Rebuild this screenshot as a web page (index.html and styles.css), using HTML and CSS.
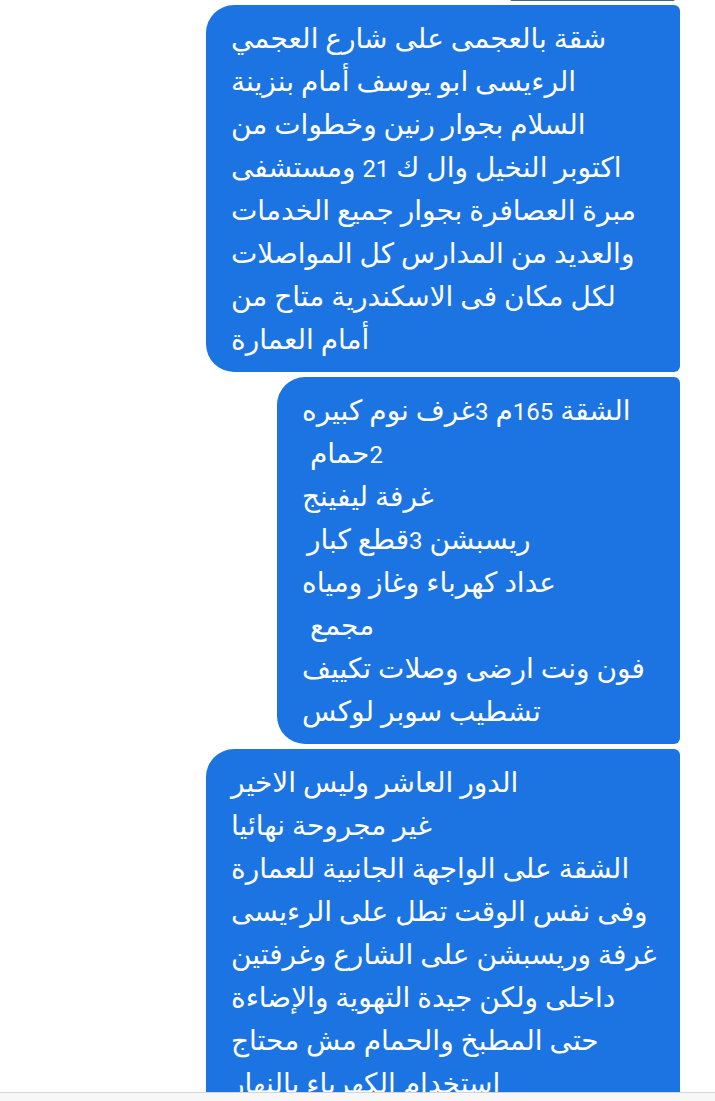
FILE: index.html
```html
<!DOCTYPE html>
<html lang="ar">
<head>
<meta charset="utf-8">
<title>Chat</title>
<link rel="stylesheet" href="styles.css">
</head>
<body>
<main class="thread">
  <div class="prev"></div>
  <div class="bubble bubble--wide">
    <p class="line">شقة بالعجمى على شارع العجمي</p>
    <p class="line">الرءيسى ابو يوسف أمام بنزينة</p>
    <p class="line">السلام بجوار رنين وخطوات من</p>
    <p class="line">اكتوبر النخيل وال ك <span class="num">21</span> ومستشفى</p>
    <p class="line">مبرة العصافرة بجوار جميع الخدمات</p>
    <p class="line">والعديد من المدارس كل المواصلات</p>
    <p class="line">لكل مكان فى الاسكندرية متاح من</p>
    <p class="line">أمام العمارة</p>
  </div>
  <div class="bubble bubble--narrow">
    <p class="line">الشقة <span class="num">165</span>م <span class="num">3</span>غرف نوم كبيره</p>
    <p class="line indent"><span class="num">2</span>حمام</p>
    <p class="line">غرفة ليفينج</p>
    <p class="line indent-s">ريسبشن <span class="num">3</span>قطع كبار</p>
    <p class="line">عداد كهرباء وغاز ومياه</p>
    <p class="line indent">مجمع</p>
    <p class="line">فون ونت ارضى وصلات تكييف</p>
    <p class="line">تشطيب سوبر لوكس</p>
  </div>
  <div class="bubble bubble--wide">
    <p class="line">الدور العاشر وليس الاخير</p>
    <p class="line">غير مجروحة نهائيا</p>
    <p class="line">الشقة على الواجهة الجانبية للعمارة</p>
    <p class="line">وفى نفس الوقت تطل على الرءيسى</p>
    <p class="line">غرفة وريسبشن على الشارع وغرفتين</p>
    <p class="line">داخلى ولكن جيدة التهوية والإضاءة</p>
    <p class="line">حتى المطبخ والحمام مش محتاج</p>
    <p class="line">استخدام الكهرباء بالنهار</p>
    <p class="line">والشقة هادئة جدا</p>
  </div>
</main>
<footer class="composer"></footer>
</body>
</html>
```

FILE: styles.css
```css
html, body {
  margin: 0;
  padding: 0;
  background: #ffffff;
}

body {
  font-family: Roboto, "DejaVu Sans", sans-serif;
  overflow: hidden;
}

.thread {
  display: flex;
  flex-direction: column;
  align-items: flex-end;
  gap: 5px;
  padding-right: 35px;
}

.prev {
  width: 165px;
  height: 2px;
  background: #3f648c;
  border-radius: 0 0 4px 4px;
  margin-top: -1px;
  margin-bottom: -1px;
  margin-right: 5px;
}

.bubble {
  box-sizing: border-box;
  background: #1c74e2;
  color: #ffffff;
  border-radius: 28px 6px 6px 28px;
  padding: 12px 23px 11px 25px;
  direction: rtl;
  text-align: left;
  font-size: 28px;
  line-height: 43px;
}

.bubble--wide {
  width: 474px;
}

.bubble--narrow {
  width: 403px;
}

.line {
  margin: 0;
  height: 43px;
  white-space: nowrap;
}

.num {
  font-size: 24px;
  line-height: 1;
}

.indent {
  padding-left: 8px;
}

.indent-s {
  padding-left: 5px;
}

.composer {
  position: fixed;
  left: 0;
  right: 0;
  bottom: 0;
  height: 8px;
  background: #f7f7f7;
  border-top: 1px solid #d4d4d4;
}
```
